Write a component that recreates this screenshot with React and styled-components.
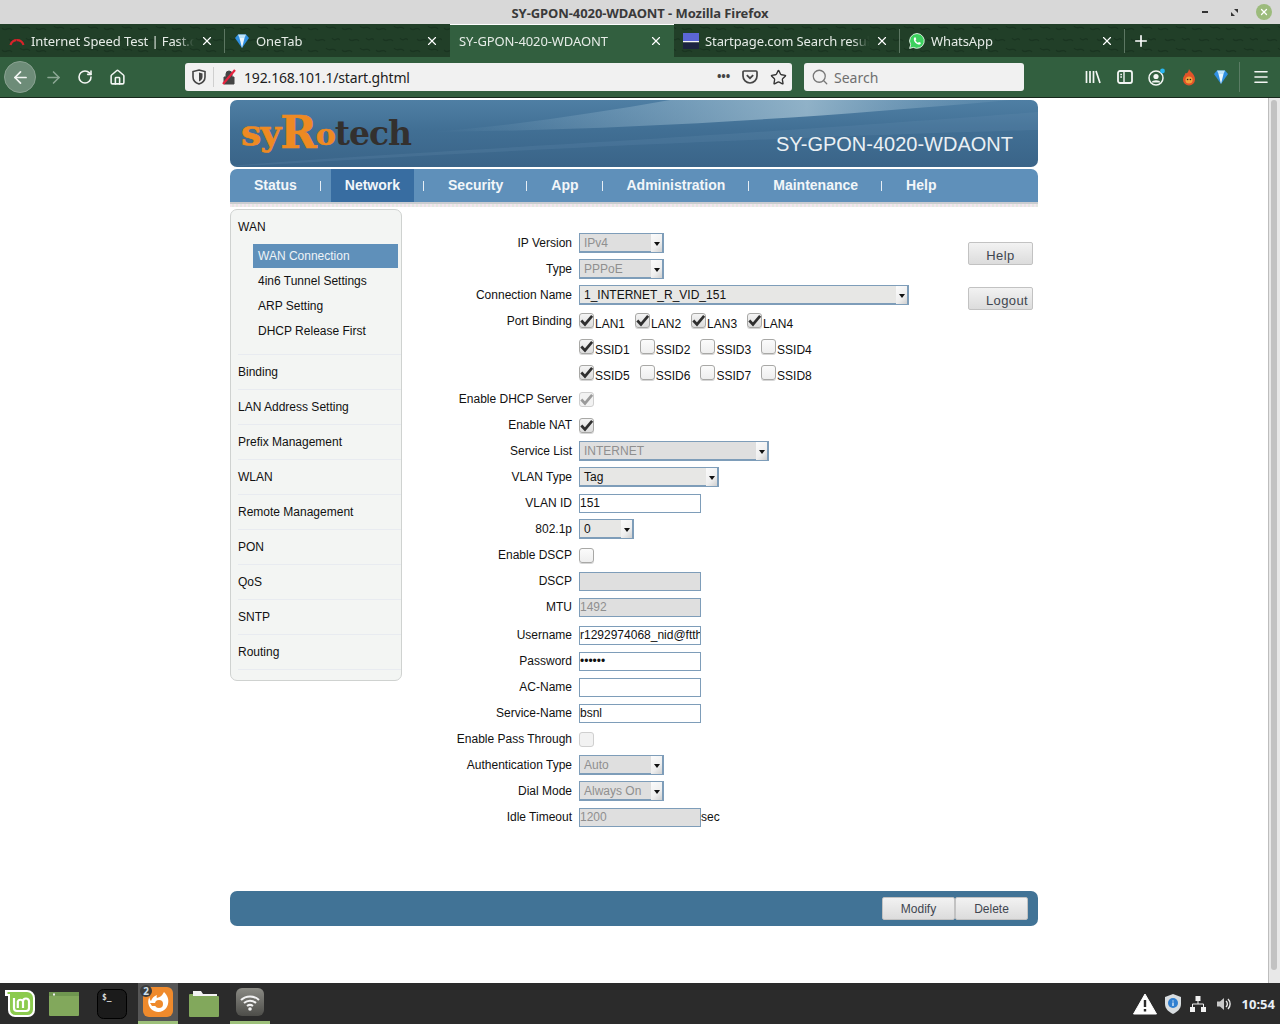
import React from 'react';
import styled, { createGlobalStyle } from 'styled-components';
import { ArrowLeft, ArrowRight, RotateCw, Home, X, Plus, Search, Star, Menu } from 'lucide-react';

const GlobalStyle = createGlobalStyle`
	html, body {
		margin: 0;
		padding: 0;
		height: 100%;
		overflow: hidden;
		background: #fff;
	}
	* {
		box-sizing: border-box;
	}
`;

const sideMenu = ['Binding', 'LAN Address Setting', 'Prefix Management', 'WLAN', 'Remote Management', 'PON', 'QoS', 'SNTP', 'Routing'];
const subMenu = ['WAN Connection', '4in6 Tunnel Settings', 'ARP Setting', 'DHCP Release First'];
const navItems = ['Status', 'Network', 'Security', 'App', 'Administration', 'Maintenance', 'Help'];

const tabTexture = encodeURIComponent(
	`<svg xmlns="http://www.w3.org/2000/svg" width="34" height="22"><path d="M2 4c4 5 6-3 10 2M20 2c3 5 7-2 10 3M9 15c4 5 6-3 10 2M26 14c3 5 5-2 8 2" fill="none" stroke="#1a3521" stroke-width="1.4"/></svg>`
);

const Screen = styled.div`
	width: 1280px;
	height: 1024px;
	display: flex;
	flex-direction: column;
	font-family: 'Liberation Sans', Arial, sans-serif;
	font-size: 12px;
	color: #111;
	overflow: hidden;
`;

/* window chrome */
const TitleBar = styled.div`
	height: 24px;
	flex: none;
	background: #d8d8d8;
	display: flex;
	align-items: center;
	justify-content: center;
	position: relative;
	font-family: 'Noto Sans', sans-serif;
	font-size: 13px;
	letter-spacing: -0.08px;
	font-weight: 700;
	color: #3a3a3a;
	padding-top: 1px;
`;

const WindowButtons = styled.div`
	position: absolute;
	right: 8px;
	top: 4px;
	display: flex;
	align-items: center;
`;

const MinButton = styled.span`
	width: 6px;
	height: 2px;
	background: #333;
	margin-right: 23px;
`;

const RestoreButton = styled.svg`
	width: 7px;
	height: 7px;
	margin-right: 18px;
`;

const CloseCircle = styled.span`
	width: 16px;
	height: 16px;
	border-radius: 50%;
	background: #9cbb7c;
	color: #fff;
	display: flex;
	align-items: center;
	justify-content: center;
`;

const TabBar = styled.div`
	height: 33px;
	flex: none;
	background: #213f28 url("data:image/svg+xml,${tabTexture}");
	display: flex;
	align-items: stretch;
	font-family: 'Noto Sans', sans-serif;
	font-size: 13px;
	letter-spacing: -0.1px;
	color: #e6ece7;
`;

const Tab = styled.div`
	width: ${props => props.$width || 225}px;
	display: flex;
	align-items: center;
	padding: 0 11px 0 9px;
	gap: 6px;
	position: relative;
	background: ${props => (props.$active ? '#325f3f' : 'transparent')};
	border-top: ${props => (props.$active ? '1px solid #fff' : '0')};
	margin-top: ${props => (props.$active ? '0' : '1px')};

	${props =>
		props.$sep &&
		`&::after {
			content: '';
			position: absolute;
			right: 0;
			top: 4px;
			height: 24px;
			width: 1px;
			background: #5d7763;
		}`}
`;

const TabTitle = styled.span`
	flex: 1;
	overflow: hidden;
	white-space: nowrap;
	-webkit-mask-image: linear-gradient(to right, #000 90%, transparent 100%);
	mask-image: linear-gradient(to right, #000 90%, transparent 100%);
`;

const TabClose = styled(X)`
	width: 14px;
	height: 14px;
	flex: none;
	color: #fff;
`;

const NewTab = styled.div`
	width: 32px;
	display: flex;
	align-items: center;
	justify-content: center;
	color: #fff;
`;

const Toolbar = styled.div`
	height: 41px;
	flex: none;
	background: #325f3f;
	border-bottom: 1px solid #17281c;
	display: flex;
	align-items: center;
	padding: 0 3px 0 4px;
	color: #f3f6f4;
`;

const BackCircle = styled.div`
	width: 32px;
	height: 32px;
	border-radius: 50%;
	background: #6d8c78;
	border: 1px solid #8aa292;
	display: flex;
	align-items: center;
	justify-content: center;
	margin-right: 1px;
`;

const ToolIcon = styled.div`
	width: 32px;
	height: 32px;
	flex: none;
	display: flex;
	align-items: center;
	justify-content: center;
	color: ${props => (props.$dim ? '#8ba794' : 'inherit')};
`;

const UrlBar = styled.div`
	width: 607px;
	height: 28px;
	flex: none;
	margin-left: 52px;
	background: #f1f1f1;
	border-radius: 3px;
	display: flex;
	align-items: center;
	font-family: 'Noto Sans', sans-serif;
	font-size: 14px;
	letter-spacing: -0.16px;
	color: #1d1d1d;
	padding: 0 5px 0 7px;
`;

const UrlDivider = styled.span`
	width: 1px;
	height: 20px;
	background: #cfcfcf;
	margin: 0 7px 0 7px;
`;

const UrlText = styled.span`
	flex: 1;
	margin-left: 7px;
`;

const UrlDots = styled.span`
	font-weight: 700;
	color: #444;
	margin-right: 12px;
	font-size: 12px;
	line-height: 14px;
`;

const PocketIcon = styled.svg`
	margin-right: 12px;
	flex: none;
`;

const SearchBox = styled.div`
	width: 220px;
	height: 28px;
	flex: none;
	margin-left: 12px;
	background: #f1f1f1;
	border-radius: 3px;
	display: flex;
	align-items: center;
	gap: 5px;
	padding-left: 7px;
	font-family: 'Noto Sans', sans-serif;
	font-size: 14px;
	color: #6f6f6f;
`;

const ToolRight = styled.div`
	margin-left: auto;
	display: flex;
	align-items: center;
	height: 100%;
`;

const RightIcon = styled.div`
	width: 32px;
	height: 32px;
	display: flex;
	align-items: center;
	justify-content: center;
`;

const ToolSep = styled.span`
	width: 1px;
	height: 30px;
	background: #5a7c64;
	margin: 0 5px 0 2px;
`;

/* page */
const Body = styled.div`
	flex: 1;
	min-height: 0;
	display: flex;
`;

const Page = styled.div`
	flex: 1;
	padding: 2px 0 0 230px;
	background: #fff;
`;

const ScrollBar = styled.div`
	width: 12px;
	flex: none;
	background: #e8e8e8;
	border-left: 1px solid #bdbdbd;
	padding: 2px 3px 13px 2px;
`;

const ScrollThumb = styled.div`
	height: 100%;
	background: #c2c2c2;
	border-radius: 3px;
`;

const Container = styled.div`
	width: 808px;
`;

const Banner = styled.div`
	height: 67px;
	border-radius: 7px;
	background: linear-gradient(180deg, #4f7fa4 0%, #416f94 45%, #3a6488 100%);
	position: relative;
	overflow: hidden;
	display: flex;
	align-items: center;
	justify-content: space-between;
	padding: 0 25px 0 11px;
`;

const BannerSwoosh = styled.svg`
	position: absolute;
	inset: 0;
	width: 100%;
	height: 100%;
`;

const Logo = styled.div`
	position: relative;
	font-family: 'DejaVu Serif', 'Liberation Serif', serif;
	font-weight: 700;
	font-size: 33px;
	line-height: 50px;
	letter-spacing: -1px;
	color: #33302e;
	display: flex;
	align-items: baseline;
	margin-top: 1px;
`;

const LogoOrange = styled.span`
	color: #ee8a22;
	-webkit-text-stroke: 0.6px #ee8a22;
	font-size: ${props => props.$size || 36}px;
	line-height: 40px;
	display: inline-block;
	transform: translateY(${props => props.$drop || 0}px);
`;

const BannerTitle = styled.div`
	position: relative;
	font-size: 20px;
	color: #eaf0f4;
	margin-top: 22px;
`;

const Nav = styled.div`
	height: 33px;
	margin-top: 2px;
	padding-left: 10px;
	border-radius: 7px 7px 0 0;
	background: #5f90ba;
	display: flex;
	align-items: stretch;
	font-size: 14px;
	font-weight: 700;
	color: #f2f6f9;
`;

const NavItem = styled.div`
	padding: 0 14px 2px;
	display: flex;
	align-items: center;
	background: ${props => (props.$active ? '#386da1' : 'transparent')};
`;

const NavSep = styled.span`
	width: 1px;
	height: 10px;
	align-self: center;
	background: #e6eef5;
	margin: 0 10px 0 9px;
`;

const NavShadow = styled.div`
	height: 5px;
	background: repeating-linear-gradient(90deg, #f3e6ee 0 2px, #e4e8e2 2px 4px);
	border-top: 2px solid #c9ccd0;
`;

const Main = styled.div`
	display: grid;
	grid-template-columns: 172px 566px 65px;
	margin-top: 2px;
	height: 682px;
`;

const Sidebar = styled.div`
	height: 472px;
	border: 1px solid #cfd2d0;
	border-radius: 7px;
	background: #f3f5f3;
	padding-left: 7px;
`;

const SideGroup = styled.div`
	border-bottom: 1px solid #e8ebf0;
	height: 145px;
`;

const SideHead = styled.div`
	height: 34px;
	display: flex;
	align-items: center;
`;

const SubItem = styled.div`
	height: ${props => (props.$active ? 24 : 25)}px;
	margin: 0 3px 0 15px;
	padding-left: 5px;
	display: flex;
	align-items: center;
	background: ${props => (props.$active ? '#5f90ba' : 'transparent')};
	color: ${props => (props.$active ? '#eef3f7' : '#111')};
`;

const SideItem = styled.div`
	height: 35px;
	display: flex;
	align-items: center;
	border-bottom: 1px solid #e8ebf0;
`;

const Form = styled.div`
	display: flex;
	flex-direction: column;
	gap: 6px;
	padding-top: 24px;
`;

const Row = styled.div`
	display: flex;
	height: 20px;
	margin-top: ${props => (props.$shift ? 2 : 0)}px;
`;

const Label = styled.div`
	width: 170px;
	flex: none;
	margin-right: 7px;
	text-align: right;
	line-height: 20px;
	white-space: nowrap;
`;

const SelectBox = styled.div`
	width: ${props => props.$width}px;
	height: 20px;
	border: 1px solid #7e9db9;
	background: ${props => (props.$off ? '#dfdfdf' : '#e7e7e5')};
	color: ${props => (props.$off ? '#8f8f8f' : '#111')};
	display: flex;
	align-items: center;
	justify-content: space-between;
	padding-left: 4px;
	border-right-width: 2px;
	border-bottom-width: 2px;
`;

const SelectArrow = styled.span`
	width: 11px;
	height: 18px;
	background: linear-gradient(135deg, #fbfbfb 0%, #efefef 60%, #cfcfcf 100%);
	display: flex;
	align-items: center;
	justify-content: center;

	&::after {
		content: '';
		border-left: 3px solid transparent;
		border-right: 3px solid transparent;
		border-top: 4px solid #111;
		margin-top: 2px;
	}
`;

const TextInput = styled.input`
	width: 122px;
	height: 19px;
	margin: 1px 0 0;
	padding: 0 0 1px 0;
	border: 1px solid #7e9db9;
	border-radius: 0;
	outline: none;
	font-family: 'Liberation Sans', Arial, sans-serif;
	font-size: 12px;
	color: ${props => (props.disabled ? '#8f8f8f' : '#111')};
	background: ${props => (props.disabled ? '#dfdfdf' : '#fff')};
	opacity: 1;

	&:disabled {
		color: #8f8f8f;
		background: #dfdfdf;
	}
`;

const Suffix = styled.span`
	line-height: 20px;
`;

const BoxRow = styled.div`
	display: flex;
	gap: 10px;
`;

const BoxItem = styled.div`
	display: flex;
	align-items: flex-start;
`;

const BoxText = styled.span`
	line-height: 14px;
	margin-top: 6px;
`;

const Box = styled.span`
	width: 15px;
	height: 15px;
	margin: ${props => (props.$group ? 2 : 3)}px 1px 0 0;
	flex: none;
	border-radius: 3px;
	border: 1px solid ${props => (props.$off ? '#cfcfcf' : '#a8a8a6')};
	background: ${props =>
		props.$on && !props.$off
			? 'linear-gradient(180deg, #f4f4f4, #dcdcdc)'
			: props.$off
			? '#f2f2f2'
			: 'linear-gradient(180deg, #fbfbfb, #eeeeee)'};
	display: flex;
	align-items: center;
	justify-content: center;
	box-shadow: 0 1px 0 ${props => (props.$off ? 'transparent' : '#d6d6d6')};
`;

const SideButtons = styled.div`
	padding-top: 33px;
	display: flex;
	flex-direction: column;
	gap: 22px;
`;

const PlainButton = styled.div`
	height: 23px;
	border: 1px solid #c2c2c2;
	border-radius: 2px;
	background: linear-gradient(180deg, #f2f2f2 0%, #dcdcdc 100%);
	color: #3f4650;
	display: flex;
	align-items: center;
	justify-content: center;
	font-size: 13px;
	letter-spacing: 0.4px;
	padding-left: ${props => props.$indent || 0}px;
	padding-top: 4px;
`;

const FooterBar = styled.div`
	height: 35px;
	border-radius: 7px;
	background: #417396;
	display: flex;
	justify-content: flex-end;
	align-items: center;
	padding-right: 10px;
`;

const FooterButton = styled(PlainButton)`
	width: 73px;
	font-size: 12px;
	letter-spacing: 0;
	padding-top: 1px;
`;

/* desktop panel */
const Taskbar = styled.div`
	height: 41px;
	flex: none;
	background: #2b2b2b;
	display: flex;
	align-items: center;
	position: relative;
`;

const Launcher = styled.div`
	width: ${props => props.$width}px;
	height: 41px;
	margin-left: ${props => props.$left}px;
	flex: none;
	position: relative;
	display: flex;
	align-items: center;
	justify-content: center;
	background: ${props => (props.$active ? '#565656' : 'transparent')};
	${props => props.$line && 'border-bottom: 3px solid #9dc07a;'}
`;

const Badge = styled.span`
	position: absolute;
	left: 2px;
	top: 2px;
	width: 12px;
	height: 12px;
	border-radius: 50%;
	background: #3c3c3c;
	color: #cfe0f0;
	font-family: 'Noto Sans', sans-serif;
	font-size: 10px;
	font-weight: 700;
	line-height: 12px;
	text-align: center;
`;

const Tray = styled.div`
	margin-left: auto;
	display: flex;
	align-items: center;
	padding-right: 5px;
`;

const Clock = styled.span`
	font-family: 'Noto Sans', sans-serif;
	font-size: 13px;
	font-weight: 700;
	color: #e8eef6;
	margin-left: 10px;
	padding-top: 1px;
`;

const TrayIcon = styled.svg`
	margin-left: ${props => props.$left || 0}px;
	flex: none;
`;

const CheckMark = ({ color = '#2f2f2f', size = 13 }) => (
	<svg width={size} height={size} viewBox="0 0 12 12" overflow="visible">
		<path d="M1.2 6 L4.6 9.6 L11.2 1.8" fill="none" stroke={color} strokeWidth="2.5" />
	</svg>
);

const CheckBox = ({ on, off, group }) => (
	<Box $on={on} $off={off} $group={group}>
		{on && <CheckMark color={off ? '#9a9a9a' : '#2f2f2f'} />}
	</Box>
);

const BoxGroup = ({ items }) => (
	<BoxRow>
		{items.map(([name, on]) => (
			<BoxItem key={name}>
				<CheckBox on={on} group />
				<BoxText>{name}</BoxText>
			</BoxItem>
		))}
	</BoxRow>
);

const Select = ({ width, off, value }) => (
	<SelectBox $width={width} $off={off}>
		<span>{value}</span>
		<SelectArrow />
	</SelectBox>
);

const FormRow = ({ label, shift, children }) => (
	<Row $shift={shift}>
		<Label>{label}</Label>
		{children}
	</Row>
);

const Diamond = ({ size = 16 }) => (
	<svg width={size} height={size} viewBox="0 0 16 16">
		<path d="M1 5 L4 1.5 H12 L15 5 L8 15 Z" fill="#2f8fe0" />
		<path d="M4 1.5 H12 L10.5 5 H5.5 Z" fill="#bfe4fb" />
		<path d="M5.5 5 H10.5 L8 15 Z" fill="#e9f6fd" />
	</svg>
);

const App = () => {
	return (
		<Screen>
			<GlobalStyle />
			<TitleBar>
				SY-GPON-4020-WDAONT - Mozilla Firefox
				<WindowButtons>
					<MinButton />
					<RestoreButton viewBox="0 0 7 7">
						<path d="M3 0 H7 V4 Z M0 3 L4 7 H0 Z" fill="#333" />
					</RestoreButton>
					<CloseCircle>
						<X size={10} strokeWidth={3} />
					</CloseCircle>
				</WindowButtons>
			</TitleBar>

			<TabBar>
				<Tab $sep>
					<svg width="16" height="16" viewBox="0 0 16 16">
						<path d="M1.5 12 A6.8 6.8 0 0 1 14.5 12" fill="none" stroke="#d8232a" strokeWidth="2.2" />
						<path d="M7 12 L7.5 6 L9 12 Z" fill="#333" />
					</svg>
					<TabTitle>Internet Speed Test | Fast.com</TabTitle>
					<TabClose />
				</Tab>
				<Tab>
					<Diamond />
					<TabTitle>OneTab</TabTitle>
					<TabClose />
				</Tab>
				<Tab $active $width={224}>
					<TabTitle>SY-GPON-4020-WDAONT</TabTitle>
					<TabClose />
				</Tab>
				<Tab $sep $width={226}>
					<svg width="16" height="16" viewBox="0 0 16 16">
						<rect width="16" height="9" fill="#5b66d6" />
						<rect y="8" width="16" height="1.5" fill="#f4f4f4" />
						<rect y="9.5" width="16" height="6.5" fill="#1c2440" />
					</svg>
					<TabTitle>Startpage.com Search results</TabTitle>
					<TabClose />
				</Tab>
				<Tab $sep>
					<svg width="16" height="16" viewBox="0 0 16 16">
						<path d="M8 .5 A7.4 7.4 0 0 0 1.7 11.8 L.6 15.4 L4.3 14.4 A7.4 7.4 0 1 0 8 .5 Z" fill="#3dd15f" stroke="#fff" strokeWidth=".8" />
						<path d="M5.3 4.4 L6.5 4.3 L7.3 6.2 L6.5 7.2 C7 8.4 7.9 9.3 9 9.8 L10 8.9 L11.8 9.8 L11.6 11 C10.2 12.1 8 11.3 6.4 9.7 C4.9 8.2 4.3 5.8 5.3 4.4 Z" fill="#fff" />
					</svg>
					<TabTitle>WhatsApp</TabTitle>
					<TabClose />
				</Tab>
				<NewTab>
					<Plus size={18} strokeWidth={2.2} />
				</NewTab>
			</TabBar>

			<Toolbar>
				<BackCircle>
					<ArrowLeft size={19} strokeWidth={2.2} />
				</BackCircle>
				<ToolIcon $dim>
					<ArrowRight size={19} strokeWidth={2} />
				</ToolIcon>
				<ToolIcon>
					<RotateCw size={16} strokeWidth={2.4} />
				</ToolIcon>
				<ToolIcon>
					<Home size={17} strokeWidth={2.2} />
				</ToolIcon>
				<UrlBar>
					<svg width="14" height="16" viewBox="0 0 14 16">
						<path d="M7 1 L13 2.5 V8 C13 11.5 10 14 7 15 C4 14 1 11.5 1 8 V2.5 Z" fill="none" stroke="#444" strokeWidth="1.6" />
						<path d="M7 3.5 L10.5 4.4 V8 C10.5 10 8.8 11.6 7 12.4 Z" fill="#444" />
					</svg>
					<UrlDivider />
					<svg width="16" height="16" viewBox="0 0 16 16">
						<path d="M3 8 H13 V15 H3 Z M5 8 V5 A3 3 0 0 1 11 5 V8" fill="#444" stroke="#444" strokeWidth="1" fillRule="evenodd" />
						<path d="M2 15 L14 1" stroke="#e8233f" strokeWidth="2.2" />
					</svg>
					<UrlText>192.168.101.1/start.ghtml</UrlText>
					<UrlDots>•••</UrlDots>
					<PocketIcon width="16" height="16" viewBox="0 0 16 16">
						<path d="M2 2 H14 A1 1 0 0 1 15 3 V7 A7 7 0 0 1 1 7 V3 A1 1 0 0 1 2 2 Z" fill="none" stroke="#444" strokeWidth="1.7" />
						<path d="M4.8 6.2 L8 9.2 L11.2 6.2" fill="none" stroke="#444" strokeWidth="1.8" />
					</PocketIcon>
					<Star size={17} strokeWidth={1.9} color="#333" />
				</UrlBar>
				<SearchBox>
					<Search size={18} strokeWidth={1.7} color="#777" />
					Search
				</SearchBox>
				<ToolRight>
					<RightIcon>
						<svg width="16" height="16" viewBox="0 0 16 16">
							<path d="M1.5 2 V14 M5 2 V14 M8.5 2 V14 M11 2 L15 14" stroke="#f3f6f4" strokeWidth="1.7" fill="none" />
						</svg>
					</RightIcon>
					<RightIcon>
						<svg width="16" height="14" viewBox="0 0 16 14">
							<rect x="1" y="1" width="14" height="12" rx="2" fill="none" stroke="#f3f6f4" strokeWidth="1.8" />
							<path d="M7 1 V13 M3.3 4.5 H5 M3.3 7 H5" stroke="#f3f6f4" strokeWidth="1.4" />
						</svg>
					</RightIcon>
					<RightIcon>
						<svg width="20" height="20" viewBox="0 0 20 20">
							<circle cx="9" cy="11" r="7" fill="none" stroke="#f3f6f4" strokeWidth="1.5" />
							<circle cx="9" cy="9.5" r="2.6" fill="#f3f6f4" />
							<path d="M4.5 15.5 C5.5 12.5 12.5 12.5 13.5 15.5" fill="#f3f6f4" />
							<circle cx="15.5" cy="4" r="2.4" fill="#29b6f0" />
						</svg>
					</RightIcon>
					<RightIcon>
						<svg width="14" height="17" viewBox="0 0 14 17">
							<path d="M7 0 C8 3 13 5 13 10.5 A6 6 0 0 1 1 10.5 C1 7.5 3 6.5 3.5 4 C5 5 6.5 3 7 0 Z" fill="#e2542a" />
							<circle cx="7" cy="11" r="3.6" fill="#f2a13a" />
							<circle cx="5.6" cy="10.5" r=".8" fill="#222" />
							<circle cx="8.4" cy="10.5" r=".8" fill="#222" />
						</svg>
					</RightIcon>
					<RightIcon>
						<Diamond />
					</RightIcon>
					<ToolSep />
					<RightIcon>
						<Menu size={18} strokeWidth={2.2} />
					</RightIcon>
				</ToolRight>
			</Toolbar>

			<Body>
				<Page>
					<Container>
						<Banner>
							<BannerSwoosh viewBox="0 0 808 67" preserveAspectRatio="none">
								<defs>
									<linearGradient id="swoosh" x1="0" y1="0" x2="1" y2="0">
										<stop offset="0" stopColor="#7ea6c2" stopOpacity="0" />
										<stop offset=".65" stopColor="#a6c3d4" stopOpacity=".75" />
										<stop offset="1" stopColor="#7ea6c2" stopOpacity=".15" />
									</linearGradient>
								</defs>
								<path d="M200 32 C380 30 560 20 780 0 L440 0 C360 14 280 26 200 32 Z" fill="url(#swoosh)" />
								<path d="M0 66 C160 52 360 46 808 12 L808 30 C600 36 300 48 0 67 Z" fill="#6f98b6" opacity=".18" />
							</BannerSwoosh>
							<Logo>
								<LogoOrange>sy</LogoOrange>
								<LogoOrange $size={44} $drop={3}>R</LogoOrange>
								<LogoOrange $size={30}>o</LogoOrange>
								tech
							</Logo>
							<BannerTitle>SY-GPON-4020-WDAONT</BannerTitle>
						</Banner>

						<Nav>
							{navItems.map((item, i) => (
								<React.Fragment key={item}>
									<NavItem $active={item === 'Network'}>{item}</NavItem>
									{i < navItems.length - 1 && <NavSep />}
								</React.Fragment>
							))}
						</Nav>
						<NavShadow />

						<Main>
							<Sidebar>
								<SideGroup>
									<SideHead>WAN</SideHead>
									{subMenu.map((item, i) => (
										<SubItem key={item} $active={i === 0}>
											{item}
										</SubItem>
									))}
								</SideGroup>
								{sideMenu.map(item => (
									<SideItem key={item}>{item}</SideItem>
								))}
							</Sidebar>

							<Form>
								<FormRow label="IP Version">
									<Select width={85} off value="IPv4" />
								</FormRow>
								<FormRow label="Type">
									<Select width={85} off value="PPPoE" />
								</FormRow>
								<FormRow label="Connection Name">
									<Select width={330} value="1_INTERNET_R_VID_151" />
								</FormRow>
								<FormRow label="Port Binding">
									<BoxGroup items={[['LAN1', true], ['LAN2', true], ['LAN3', true], ['LAN4', true]]} />
								</FormRow>
								<FormRow>
									<BoxGroup items={[['SSID1', true], ['SSID2'], ['SSID3'], ['SSID4']]} />
								</FormRow>
								<FormRow>
									<BoxGroup items={[['SSID5', true], ['SSID6'], ['SSID7'], ['SSID8']]} />
								</FormRow>
								<FormRow label="Enable DHCP Server">
									<CheckBox on off />
								</FormRow>
								<FormRow label="Enable NAT">
									<CheckBox on />
								</FormRow>
								<FormRow label="Service List">
									<Select width={190} off value="INTERNET" />
								</FormRow>
								<FormRow label="VLAN Type">
									<Select width={140} value="Tag" />
								</FormRow>
								<FormRow label="VLAN ID">
									<TextInput readOnly value="151" />
								</FormRow>
								<FormRow label="802.1p">
									<Select width={55} value="0" />
								</FormRow>
								<FormRow label="Enable DSCP">
									<CheckBox />
								</FormRow>
								<FormRow label="DSCP">
									<TextInput disabled value="" />
								</FormRow>
								<FormRow label="MTU">
									<TextInput disabled value="1492" />
								</FormRow>
								<FormRow label="Username" shift>
									<TextInput readOnly value="r1292974068_nid@ftth.bsnl" />
								</FormRow>
								<FormRow label="Password">
									<TextInput readOnly type="password" value="123456" />
								</FormRow>
								<FormRow label="AC-Name">
									<TextInput readOnly value="" />
								</FormRow>
								<FormRow label="Service-Name">
									<TextInput readOnly value="bsnl" />
								</FormRow>
								<FormRow label="Enable Pass Through">
									<CheckBox off />
								</FormRow>
								<FormRow label="Authentication Type">
									<Select width={85} off value="Auto" />
								</FormRow>
								<FormRow label="Dial Mode">
									<Select width={85} off value="Always On" />
								</FormRow>
								<FormRow label="Idle Timeout">
									<TextInput disabled value="1200" />
									<Suffix>sec</Suffix>
								</FormRow>
							</Form>

							<SideButtons>
								<PlainButton>Help</PlainButton>
								<PlainButton $indent={13}>Logout</PlainButton>
							</SideButtons>
						</Main>

						<FooterBar>
							<FooterButton>Modify</FooterButton>
							<FooterButton>Delete</FooterButton>
						</FooterBar>
					</Container>
				</Page>
				<ScrollBar>
					<ScrollThumb />
				</ScrollBar>
			</Body>

			<Taskbar>
				<Launcher $left={4} $width={32}>
					<svg width="32" height="29" viewBox="0 0 32 29">
						<path d="M1 1 H23 A8 8 0 0 1 31 9 V21 A7 7 0 0 1 24 28 H11 A7 7 0 0 1 4 21 V7 H1 Z" fill="#fff" />
						<path d="M3.5 3 H23 A6 6 0 0 1 29 9 V20.5 A5.5 5.5 0 0 1 23.5 26 H11.5 A5.5 5.5 0 0 1 6 20.5 V5 H3.5 Z" fill="#8ccb4e" />
						<path d="M10 9 V19 A3 3 0 0 0 13 22 H22 A3 3 0 0 0 25 19 V12.5 A3 3 0 0 0 19 12.5 V19 M19 12.5 A2.8 2.8 0 0 0 13.8 12.5 V19" fill="none" stroke="#fff" strokeWidth="2.2" />
					</svg>
				</Launcher>
				<Launcher $left={13} $width={30}>
					<svg width="30" height="24" viewBox="0 0 30 24">
						<rect width="30" height="24" rx="1" fill="#82a85c" />
						<rect y="0" width="30" height="4" fill="#6f9650" />
						<rect x="4" y="1.5" width="2" height="2" fill="#eee" />
					</svg>
				</Launcher>
				<Launcher $left={18} $width={30}>
					<svg width="30" height="30" viewBox="0 0 30 30">
						<rect x=".5" y=".5" width="29" height="29" rx="6" fill="#1b1b1b" stroke="#000" />
						<text x="5" y="11" fontFamily="'DejaVu Sans Mono', monospace" fontSize="8" fontWeight="700" fill="#ddd">$_</text>
					</svg>
				</Launcher>
				<Launcher $left={11} $width={40} $active $line>
					<Badge>2</Badge>
					<svg width="30" height="30" viewBox="0 0 30 30">
						<rect width="30" height="30" rx="6" fill="#ef8a2c" />
						<path d="M21 5 C25 9 26 13 25 17 A10 10 0 1 1 6.5 10 C6.5 12 7 13 8 14 C9 11 11 9 14 8 C13.5 9.5 13.5 10.5 14 11 C17 10 19 9 21 5 Z" fill="#fff" />
						<circle cx="16" cy="17" r="4" fill="#ef8a2c" />
						<path d="M7 16 H14 L13 19 H9 Z" fill="#ef8a2c" />
					</svg>
				</Launcher>
				<Launcher $left={11} $width={30}>
					<svg width="30" height="26" viewBox="0 0 30 26">
						<path d="M1 3 H12 L14 5 H29 A1 1 0 0 1 30 6 V25 A1 1 0 0 1 29 26 H1 A1 1 0 0 1 0 25 V4 A1 1 0 0 1 1 3 Z" fill="#82a85c" />
						<path d="M4 0 H12 L14 3 H28 V5 H4 Z" fill="#f3f3f3" />
					</svg>
				</Launcher>
				<Launcher $left={11} $width={40} $line>
					<svg width="28" height="28" viewBox="0 0 28 28">
						<defs>
							<linearGradient id="wifiBg" x1="0" y1="0" x2="0" y2="1">
								<stop offset="0" stopColor="#8a8a84" />
								<stop offset="1" stopColor="#4d4d49" />
							</linearGradient>
						</defs>
						<rect width="28" height="28" rx="6" fill="url(#wifiBg)" />
						<path d="M5 12 A13 13 0 0 1 23 12 M8 15 A9 9 0 0 1 20 15 M11 18 A5 5 0 0 1 17 18" fill="none" stroke="#f2f2f2" strokeWidth="2" />
						<circle cx="14" cy="21" r="1.8" fill="#f2f2f2" />
					</svg>
				</Launcher>
				<Tray>
					<TrayIcon width="24" height="22" viewBox="0 0 24 22">
						<path d="M12 1 L23.5 21 H.5 Z" fill="#fff" stroke="#fff" strokeLinejoin="round" />
						<path d="M12 7 V14 M12 16 V18.5" stroke="#2b2b2b" strokeWidth="2.4" />
					</TrayIcon>
					<TrayIcon $left={8} width="16" height="20" viewBox="0 0 16 20">
						<path d="M8 0 L16 3 V10 C16 15 12 18 8 20 C4 18 0 15 0 10 V3 Z" fill="#d8dde0" />
						<circle cx="8" cy="9" r="5" fill="#2f7fd0" />
						<path d="M8 6.5 V7.5 M8 8.5 V12" stroke="#e8f2fb" strokeWidth="1.3" />
					</TrayIcon>
					<TrayIcon $left={9} width="16" height="16" viewBox="0 0 16 16">
						<rect x="5.5" y="0" width="5" height="5" fill="#f2f2f2" />
						<rect x="0" y="11" width="5" height="5" fill="#f2f2f2" />
						<rect x="11" y="11" width="5" height="5" fill="#f2f2f2" />
						<path d="M8 5 V8 M2.5 11 V8 H13.5 V11" stroke="#f2f2f2" fill="none" />
					</TrayIcon>
					<TrayIcon $left={10} width="16" height="16" viewBox="0 0 16 16">
						<path d="M1 5.5 H4 L8 2 V14 L4 10.5 H1 Z" fill="#c8c8c8" />
						<path d="M10 5 A4 4 0 0 1 10 11 M12 3 A7 7 0 0 1 12 13" fill="none" stroke="#e8e8e8" strokeWidth="1.4" />
					</TrayIcon>
					<Clock>10:54</Clock>
				</Tray>
			</Taskbar>
		</Screen>
	);
};

export default App;
